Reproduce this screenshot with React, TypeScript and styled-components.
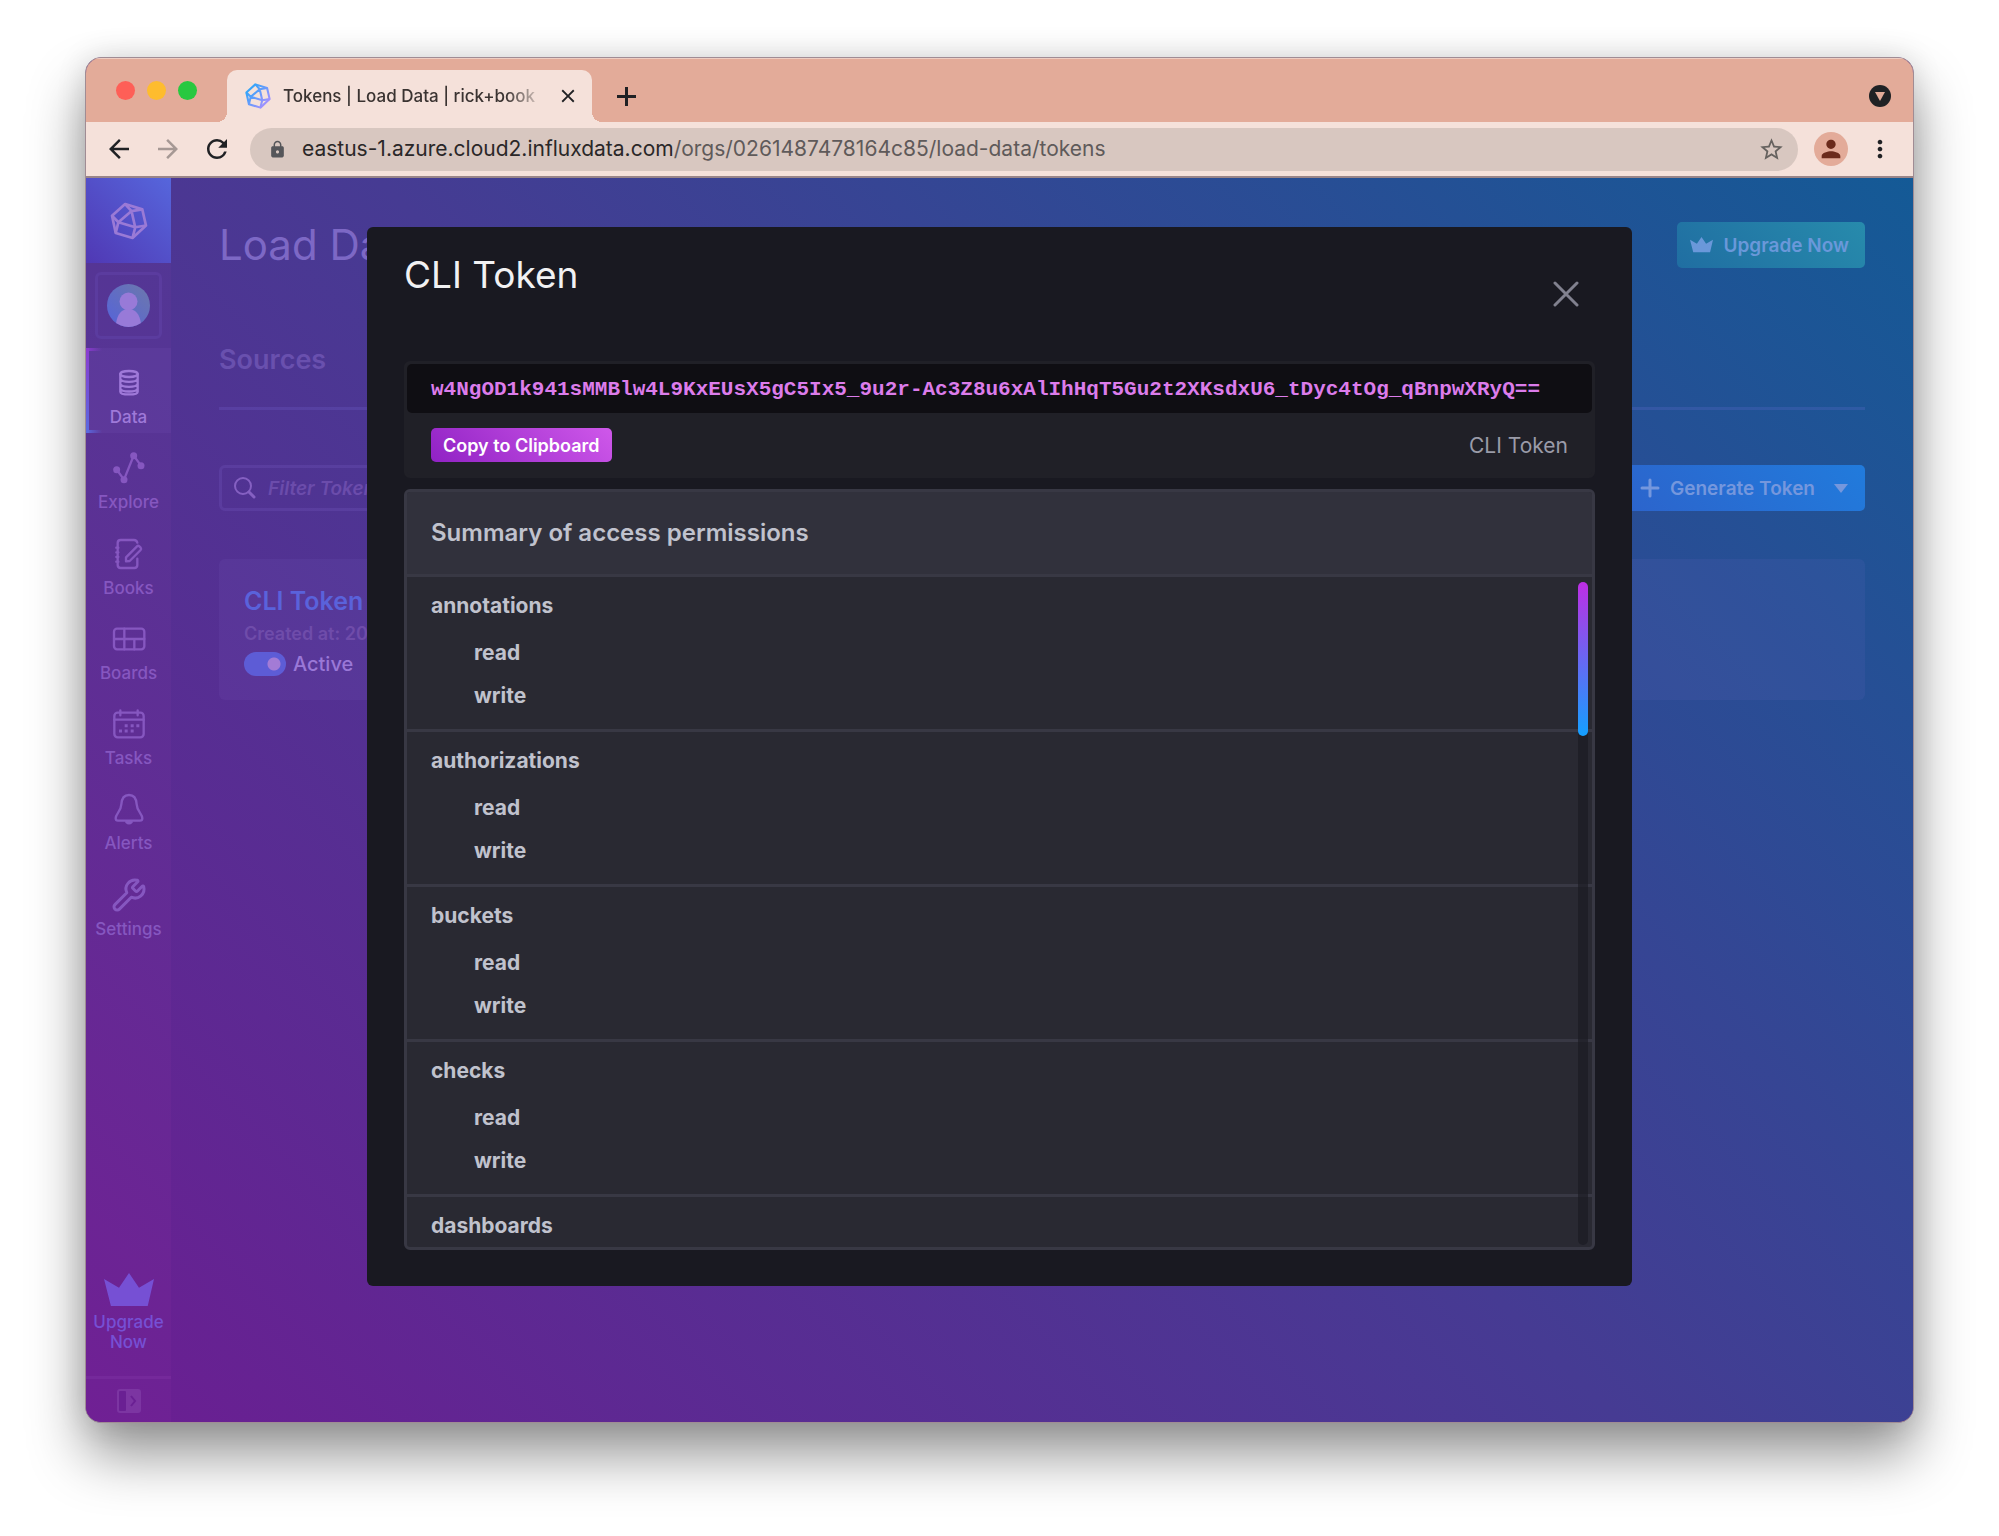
import React from "react";
import styled, { createGlobalStyle, css } from "styled-components";
import {
  MdArrowBack,
  MdArrowForward,
  MdClose,
  MdLock,
  MdMoreVert,
  MdPerson,
  MdRefresh,
  MdStarBorder,
} from "react-icons/md";
import { Wrench } from "lucide-react";

const GlobalStyle = createGlobalStyle`
  *, *::before, *::after { box-sizing: border-box; }
  body { margin: 0; background: #fff; font-family: Inter, sans-serif; }
  h1, h2, h3, p, ul { margin: 0; padding: 0; }
  button, input { font-family: inherit; }
  button { border: 0; padding: 0; background: none; cursor: pointer; }
  a { text-decoration: none; color: inherit; }
  svg { display: block; flex: none; }
`;

/* ---------- browser window ---------- */

const Desktop = styled.div`
  min-height: 100vh;
  display: flex;
  padding: 57px 85px 113px;
`;

const BrowserWindow = styled.div`
  flex: 1;
  min-width: 0;
  display: flex;
  flex-direction: column;
  overflow: hidden;
  border: 1px solid #a08c94;
  border-radius: 16px;
  background: #5a2e92;
  box-shadow: 0 32px 56px rgba(0, 0, 0, 0.42), 0 0 30px rgba(0, 0, 0, 0.12);
`;

const TabStrip = styled.div`
  height: 64px;
  display: flex;
  align-items: flex-end;
  padding: 0 22px 0 30px;
  background: #e3ab99;
  border-top: 1px solid #efcdc2;
`;

const WindowButtons = styled.div`
  display: flex;
  align-items: center;
  gap: 12px;
  height: 64px;
  margin-right: 30px;
`;

const WindowButton = styled.button<{ $color: string }>`
  width: 19px;
  height: 19px;
  border-radius: 50%;
  background: ${(p) => p.$color};
`;

const Tab = styled.div`
  position: relative;
  width: 365px;
  height: 52px;
  display: flex;
  align-items: center;
  gap: 12px;
  padding: 0 13px 0 18px;
  border-radius: 10px 10px 0 0;
  background: #f5e1da;

  &::before,
  &::after {
    content: "";
    position: absolute;
    bottom: 0;
    width: 10px;
    height: 10px;
  }
  &::before {
    right: 100%;
    background: radial-gradient(circle at 0 0, transparent 10px, #f5e1da 10px);
  }
  &::after {
    left: 100%;
    background: radial-gradient(circle at 100% 0, transparent 10px, #f5e1da 10px);
  }
`;

const TabTitle = styled.span`
  flex: 1;
  min-width: 0;
  overflow: hidden;
  white-space: nowrap;
  font-size: 17px;
  line-height: 24px;
  font-weight: 500;
  color: #3a3331;
  mask-image: linear-gradient(90deg, #000 85%, transparent);
`;

const IconButton = styled.button<{ $size: number; $color?: string }>`
  width: ${(p) => p.$size}px;
  height: ${(p) => p.$size}px;
  display: grid;
  place-items: center;
  color: ${(p) => p.$color ?? "#202124"};
`;

const NewTab = styled(IconButton)`
  margin: 0 auto 11px 19px;
`;

const TabSearch = styled(IconButton)`
  margin-bottom: 15px;
`;

const Toolbar = styled.div`
  height: 56px;
  display: flex;
  align-items: center;
  padding: 0 19px 0 18px;
  background: #f5e1da;
  border-bottom: 2px solid #9a8588;
`;

const NavButtons = styled.div`
  display: flex;
  gap: 19px;
  margin-right: 18px;
`;

const AddressBar = styled.div`
  flex: 1;
  min-width: 0;
  height: 43px;
  display: flex;
  align-items: center;
  gap: 15px;
  padding: 0 13px 0 18px;
  border-radius: 22px;
  background: #d8c7c0;
  color: #55565a;
`;

const Url = styled.span`
  flex: 1;
  overflow: hidden;
  white-space: nowrap;
  font-size: 21px;
  line-height: 28px;
  color: #5f5a5a;

  b {
    font-weight: 400;
    color: #2a2728;
  }
`;

const Profile = styled.button`
  width: 34px;
  height: 34px;
  margin: 0 18px 0 16px;
  display: grid;
  place-items: center;
  border-radius: 50%;
  background: #e3ab99;
  color: #6b2a1b;
`;

/* ---------- application ---------- */

const AppFrame = styled.div`
  position: relative;
  flex: 1;
  display: flex;
  background: linear-gradient(45deg, #6b1e92, #463b93 50%, #145a96);
`;

const Sidebar = styled.nav`
  width: 85px;
  display: flex;
  flex-direction: column;
  background: rgba(255, 110, 200, 0.04);
`;

const Brand = styled.a`
  height: 85px;
  display: grid;
  place-items: center;
  background: linear-gradient(45deg, #5038b4, #5666dc);
  color: #9a7ad6;
`;

const UserButton = styled.button`
  width: 67px;
  height: 67px;
  margin: 9px auto;
  display: grid;
  place-items: center;
  border: 3px solid #5b3c9f;
  border-radius: 6px;
`;

const NavList = styled.ul`
  height: 597px;
  display: grid;
  grid-auto-rows: 1fr;
  list-style: none;
`;

const NavLink = styled.a<{ $active?: boolean }>`
  position: relative;
  height: 100%;
  display: flex;
  flex-direction: column;
  align-items: center;
  gap: 6px;
  padding-top: 17px;
  font-size: 17px;
  line-height: 20px;
  font-weight: 500;
  color: #8657c0;
  ${(p) =>
    p.$active &&
    css`
      color: #9f79d9;
      background: rgba(190, 150, 255, 0.06);
      &::before {
        content: "";
        position: absolute;
        inset: 0 auto 0 0;
        width: 16px;
        background:
          linear-gradient(#8b3bd0, #5a6ae0) 0 0 / 3px 100% no-repeat,
          linear-gradient(90deg, #8b3bd0, transparent) 0 0 / 100% 3px no-repeat,
          linear-gradient(90deg, #5a6ae0, transparent) 0 100% / 100% 3px no-repeat;
      }
    `}
`;

const SidebarUpgrade = styled.a`
  margin-top: auto;
  display: flex;
  flex-direction: column;
  align-items: center;
  gap: 6px;
  padding-bottom: 24px;
  font-size: 17px;
  line-height: 20px;
  font-weight: 500;
  text-align: center;
  color: #7650d4;
`;

const CollapseButton = styled.button`
  height: 46px;
  display: grid;
  place-items: center;
  border-top: 3px solid #75299b;
`;

const Page = styled.main`
  flex: 1;
  min-width: 0;
  padding: 44px 48px;
`;

const PageHeader = styled.header`
  display: flex;
  align-items: center;
  justify-content: space-between;
`;

const PageTitle = styled.h1`
  font-size: 42px;
  line-height: 46px;
  font-weight: 400;
  color: #7d68c5;
`;

const ActionButton = styled.button<{ $tone: "teal" | "blue" }>`
  height: 46px;
  display: flex;
  align-items: center;
  gap: 10px;
  padding: 0 16px 0 13px;
  border-radius: 5px;
  font-size: 19px;
  font-weight: 600;
  ${(p) =>
    p.$tone === "teal"
      ? css`
          background: linear-gradient(45deg, #206ea2, #278bac);
          color: #6a98da;
        `
      : css`
          background: linear-gradient(45deg, #2c64cc, #217bdc);
          color: #7597dd;
        `}
`;

const TabsBar = styled.div`
  display: flex;
  margin-top: 53px;
  height: 89px;
  padding-top: 23px;
  border-bottom: 3px solid rgba(135, 125, 240, 0.16);
  font-size: 27px;
  line-height: 32px;
  font-weight: 600;
  color: #6950ae;
`;

const Controls = styled.div`
  display: flex;
  justify-content: space-between;
  margin: 55px 0 48px;
`;

const SearchBox = styled.label`
  width: 340px;
  height: 46px;
  display: flex;
  align-items: center;
  gap: 12px;
  padding: 0 12px;
  border: 3px solid rgba(145, 120, 230, 0.15);
  border-radius: 6px;
  color: #8560c2;

  input {
    flex: 1;
    min-width: 0;
    border: 0;
    padding: 0;
    background: none;
    outline: 0;
    font-size: 19px;
    font-weight: 600;
    font-style: italic;
    color: #8560c2;
  }
  input::placeholder {
    color: #6b4cab;
    opacity: 1;
  }
`;

const TokenCard = styled.article`
  height: 141px;
  display: flex;
  flex-direction: column;
  align-items: flex-start;
  padding: 25px;
  border-radius: 6px;
  background: rgba(140, 120, 220, 0.09);
`;

const TokenName = styled.a`
  font-size: 25px;
  line-height: 34px;
  font-weight: 600;
  color: #5a62db;
`;

const TokenMeta = styled.p`
  font-size: 18px;
  line-height: 32px;
  font-weight: 600;
  color: #6f4caa;
`;

const ToggleLabel = styled.label`
  display: flex;
  align-items: center;
  gap: 7px;
  font-size: 20px;
  line-height: 28px;
  font-weight: 500;
  color: #9a78d7;
`;

const Toggle = styled.input`
  appearance: none;
  width: 42px;
  height: 24px;
  margin: 0;
  border-radius: 12px;
  background: radial-gradient(circle at 30px 12px, #a37bd6 6px, #5d5cd6 7px);
`;

/* ---------- token overlay ---------- */

const Overlay = styled.div`
  position: absolute;
  inset: 0;
  display: flex;
  justify-content: center;
  padding: 49px 16px 136px;
`;

const Dialog = styled.section`
  width: 100%;
  max-width: 1265px;
  display: flex;
  flex-direction: column;
  padding: 25px 37px 36px;
  border-radius: 6px;
  background: #191921;
`;

const DialogHeader = styled.header`
  display: flex;
  justify-content: space-between;
  height: 109px;
  padding-right: 16px;
`;

const DialogTitle = styled.h2`
  font-size: 37px;
  line-height: 46px;
  font-weight: 400;
  color: #f1f1f3;
`;

const DialogClose = styled(IconButton)`
  margin-top: 29px;
`;

const TokenBox = styled.div`
  border: 3px solid #202027;
  border-radius: 6px;
  background: #202027;
`;

const TokenValue = styled.code`
  display: block;
  padding: 3px 24px 0;
  overflow: hidden;
  white-space: nowrap;
  border-radius: 5px;
  background: #0f0e13;
  font-family: "Liberation Mono", monospace;
  font-size: 21px;
  line-height: 46px;
  font-weight: 700;
  color: #dc7ceb;
`;

const TokenFooter = styled.div`
  display: flex;
  align-items: center;
  justify-content: space-between;
  height: 62px;
  padding: 2px 24px 0;
  font-size: 21px;
  color: #9a9ba8;
`;

const CopyButton = styled.button`
  height: 34px;
  padding: 0 12px;
  border-radius: 5px;
  background: linear-gradient(45deg, #9022c4, #cf58ea);
  color: #fff;
  font-size: 18px;
  font-weight: 600;
`;

const Panel = styled.div`
  flex: 1;
  min-height: 0;
  display: flex;
  flex-direction: column;
  margin-top: 11px;
  overflow: hidden;
  border: 3px solid #383844;
  border-radius: 6px;
  background: #292932;
  color: #c0c2cd;
`;

const PanelTitle = styled.h3`
  padding: 25px 24px;
  border-bottom: 3px solid #383844;
  background: #31313c;
  font-size: 24px;
  line-height: 32px;
  font-weight: 600;
`;

const PanelBody = styled.div`
  position: relative;
  flex: 1 1 0;
  min-height: 0;
  overflow: hidden;
`;

const Resource = styled.section`
  padding: 14px 24px 18px;
  border-bottom: 3px solid #383844;
  font-size: 21px;
  line-height: 30px;
  font-weight: 700;

  h4 {
    margin: 0 0 17px;
    font-size: inherit;
    font-weight: inherit;
  }
  ul {
    display: grid;
    row-gap: 13px;
    padding-left: 43px;
    list-style: none;
  }
`;

const ScrollTrack = styled.div`
  position: absolute;
  top: 5px;
  right: 4px;
  bottom: 2px;
  width: 10px;
  border-radius: 5px;
  background: rgba(26, 26, 34, 0.65);
`;

const ScrollThumb = styled.div`
  height: 154px;
  border-radius: 5px;
  background: linear-gradient(#be2ee4, #14a0ff);
`;

/* ---------- drawings ---------- */

const InfluxMark = ({ size, gradient }: { size: number; gradient?: boolean }) => (
  <svg width={size} height={size} viewBox="88 95 113 113" fill="none" strokeWidth={gradient ? 9 : 8} strokeLinejoin="round" stroke={gradient ? "url(#mark)" : "currentColor"}>
    {gradient && (
      <defs>
        <linearGradient id="mark" gradientUnits="userSpaceOnUse" x1="94" y1="110" x2="190" y2="200">
          <stop offset="0" stopColor="#22a8f8" />
          <stop offset="1" stopColor="#b48dff" />
        </linearGradient>
      </defs>
    )}
    <path d="M133 101 184 117 195 165 155 202 105 187 94 136Z" />
    <path d="M113 155 152 122 163 170ZM133 101 152 122 184 117M195 165 163 170 155 202M105 187 113 155 94 136" />
  </svg>
);

const Crown = ({ width }: { width: number }) => (
  <svg width={width} viewBox="0 0 150 100" fill="currentColor">
    <path d="M0 18 45 44 75 0 105 44 150 18 131 100H21Z" />
  </svg>
);

const Avatar = () => (
  <svg width="43" height="43" viewBox="0 0 43 43">
    <defs>
      <linearGradient id="disc" x1="0" y1="1" x2="1" y2="0">
        <stop offset="0" stopColor="#5563da" />
        <stop offset="1" stopColor="#6d78ab" />
      </linearGradient>
      <clipPath id="discClip">
        <circle cx="21.5" cy="21.5" r="21.5" />
      </clipPath>
    </defs>
    <circle cx="21.5" cy="21.5" r="21.5" fill="url(#disc)" />
    <g fill="#987ad8" clipPath="url(#discClip)">
      <circle cx="21.5" cy="17.5" r="9" />
      <path d="M9 40C10 30 15 25 21.500 25S33 30 34 40V43H9Z" />
    </g>
  </svg>
);

const NavIcon = ({ children }: { children: React.ReactNode }) => (
  <svg width="36" height="36" viewBox="0 0 108 108" fill="none" stroke="currentColor" strokeWidth="7" strokeLinecap="round" strokeLinejoin="round">
    {children}
  </svg>
);

const navItems = [
  {
    label: "Data",
    icon: (
      <NavIcon>
        <ellipse cx="54" cy="27" rx="26" ry="9" />
        <path d="M28 27V80C28 91 80 91 80 80V27M28 43C33 53 75 53 80 43M28 58C33 68 75 68 80 58M28 72C33 82 75 82 80 72" />
      </NavIcon>
    ),
  },
  {
    label: "Explore",
    icon: (
      <NavIcon>
        <path d="M17 59 39 89 68 17 90 47" />
        <g fill="currentColor" stroke="none">
          <circle cx="17" cy="59" r="10.500" />
          <circle cx="39" cy="89" r="10.500" />
          <circle cx="68" cy="17" r="10.500" />
          <circle cx="90" cy="47" r="10.500" />
        </g>
      </NavIcon>
    ),
  },
  {
    label: "Books",
    icon: (
      <NavIcon>
        <path d="M79 20Q77 12 69 12H29Q20 12 20 21V87Q20 96 29 96H70Q79 96 79 87V68" />
        <path d="M45 76V64L78 31Q81 28 85 31L89 35Q92 39 89 42L56 75Z" />
        <path d="M16 35H22M16 49H22M16 63H22M16 77H22" />
      </NavIcon>
    ),
  },
  {
    label: "Boards",
    icon: (
      <NavIcon>
        <rect x="9" y="23" width="91" height="62" rx="9" />
        <path d="M9 54H100M40 23V85M70 54V85" />
      </NavIcon>
    ),
  },
  {
    label: "Tasks",
    icon: (
      <NavIcon>
        <rect x="10" y="20" width="88" height="74" rx="10" />
        <path d="M10 41H98M28 13V28M80 13V28" />
        <path strokeWidth="9" strokeLinecap="butt" d="M41 59H50M59 59H68M76 59H85M24 75H33M41 75H50M59 75H68" />
      </NavIcon>
    ),
  },
  {
    label: "Alerts",
    icon: (
      <NavIcon>
        <path d="M54 12C38 12 32 24 31 40C30 62 14 68 14 82Q14 89 21 89H87Q94 89 94 82C94 68 78 62 77 40C76 24 70 12 54 12Z" />
        <path d="M46 93Q54 100 62 93Z" />
      </NavIcon>
    ),
  },
  { label: "Settings", icon: <Wrench size={36} strokeWidth={2} /> },
];

const SearchIcon = () => (
  <svg width="22" height="22" viewBox="0 0 22 22" fill="none" stroke="currentColor" strokeLinecap="round">
    <circle cx="9" cy="9" r="8" strokeWidth="2" />
    <path d="M15 15 20 20" strokeWidth="3" />
  </svg>
);

const CollapseIcon = () => (
  <svg width="24" height="24" viewBox="0 0 24 24">
    <rect width="24" height="24" rx="3" fill="#7c35a2" />
    <rect x="2" y="2" width="7" height="20" rx="1" fill="#6a2093" />
    <path d="M14 7 18 12 14 17" fill="none" stroke="#6a2093" strokeWidth="2" />
  </svg>
);

const resources = [
  { name: "annotations", actions: ["read", "write"] },
  { name: "authorizations", actions: ["read", "write"] },
  { name: "buckets", actions: ["read", "write"] },
  { name: "checks", actions: ["read", "write"] },
  { name: "dashboards", actions: [] },
];
const token =
  "w4NgOD1k941sMMBlw4L9KxEUsX5gC5Ix5_9u2r-Ac3Z8u6xAlIhHqT5Gu2t2XKsdxU6_tDyc4tOg_qBnpwXRyQ==";

const BrowserChrome = () => (
  <>
    <TabStrip>
      <WindowButtons>
        <WindowButton $color="#fe5f57" aria-label="Close window" />
        <WindowButton $color="#febc2e" aria-label="Minimize window" />
        <WindowButton $color="#28c840" aria-label="Zoom window" />
      </WindowButtons>
      <Tab>
        <InfluxMark size={26} gradient />
        <TabTitle>Tokens | Load Data | rick+book</TabTitle>
        <IconButton $size={22} aria-label="Close tab">
          <MdClose size={22} />
        </IconButton>
      </Tab>
      <NewTab $size={30} aria-label="New tab">
        <svg width="19" height="19" viewBox="0 0 19 19" stroke="currentColor" strokeWidth="3">
          <path d="M9.500 0V19M0 9.500H19" />
        </svg>
      </NewTab>
      <TabSearch $size={22} aria-label="Search tabs">
        <svg width="22" height="22" viewBox="0 0 22 22">
          <circle cx="11" cy="11" r="11" fill="#202124" />
          <path d="M6 7H16L11 16Z" fill="#e3ab99" />
        </svg>
      </TabSearch>
    </TabStrip>
    <Toolbar>
      <NavButtons>
        <IconButton $size={30} aria-label="Back">
          <MdArrowBack size={30} />
        </IconButton>
        <IconButton $size={30} $color="#a69894" aria-label="Forward">
          <MdArrowForward size={30} />
        </IconButton>
        <IconButton $size={30} aria-label="Reload">
          <MdRefresh size={30} />
        </IconButton>
      </NavButtons>
      <AddressBar>
        <MdLock size={19} />
        <Url>
          <b>eastus-1.azure.cloud2.influxdata.com</b>/orgs/0261487478164c85/load-data/tokens
        </Url>
        <IconButton $size={28} $color="#66625f" aria-label="Bookmark this page">
          <MdStarBorder size={27} />
        </IconButton>
      </AddressBar>
      <Profile aria-label="Profile">
        <MdPerson size={28} />
      </Profile>
      <IconButton $size={28} aria-label="Browser menu">
        <MdMoreVert size={28} />
      </IconButton>
    </Toolbar>
  </>
);

export default function App() {
  return (
    <Desktop>
      <GlobalStyle />
      <BrowserWindow>
        <BrowserChrome />
        <AppFrame>
          <Sidebar>
            <Brand href="#" aria-label="Home">
              <InfluxMark size={38} />
            </Brand>
            <UserButton aria-label="Account">
              <Avatar />
            </UserButton>
            <NavList>
              {navItems.map((item, i) => (
                <li key={item.label}>
                  <NavLink href="#" $active={i === 0}>
                    {item.icon}
                    {item.label}
                  </NavLink>
                </li>
              ))}
            </NavList>
            <SidebarUpgrade href="#">
              <Crown width={50} />
              <span>
                Upgrade
                <br />
                Now
              </span>
            </SidebarUpgrade>
            <CollapseButton aria-label="Expand sidebar">
              <CollapseIcon />
            </CollapseButton>
          </Sidebar>
          <Page>
            <PageHeader>
              <PageTitle>Load Data</PageTitle>
              <ActionButton $tone="teal">
                <Crown width={23} />
                Upgrade Now
              </ActionButton>
            </PageHeader>
            <TabsBar>
              <a href="#">Sources</a>
            </TabsBar>
            <Controls>
              <SearchBox>
                <SearchIcon />
                <input placeholder="Filter Tokens..." aria-label="Filter tokens" />
              </SearchBox>
              <ActionButton $tone="blue">
                <svg width="20" height="20" viewBox="0 0 20 20" stroke="currentColor" strokeWidth="3" strokeLinecap="round">
                  <path d="M10 2V18M2 10H18" />
                </svg>
                Generate Token
                <svg width="24" height="9" viewBox="0 0 24 9" fill="currentColor">
                  <path d="M9 0H23L16 9Z" />
                </svg>
              </ActionButton>
            </Controls>
            <TokenCard>
              <TokenName href="#">CLI Token</TokenName>
              <TokenMeta>Created at: 20</TokenMeta>
              <ToggleLabel>
                <Toggle type="checkbox" defaultChecked />
                Active
              </ToggleLabel>
            </TokenCard>
          </Page>
          <Overlay>
            <Dialog role="dialog" aria-labelledby="dialog-title">
              <DialogHeader>
                <DialogTitle id="dialog-title">CLI Token</DialogTitle>
                <DialogClose $size={26} $color="#81818f" aria-label="Close">
                  <svg width="26" height="26" viewBox="0 0 26 26" stroke="currentColor" strokeWidth="3" strokeLinecap="round">
                    <path d="M2 2 24 24M24 2 2 24" />
                  </svg>
                </DialogClose>
              </DialogHeader>
              <TokenBox>
                <TokenValue>{token}</TokenValue>
                <TokenFooter>
                  <CopyButton>Copy to Clipboard</CopyButton>
                  <span>CLI Token</span>
                </TokenFooter>
              </TokenBox>
              <Panel>
                <PanelTitle>Summary of access permissions</PanelTitle>
                <PanelBody>
                  {resources.map((resource) => (
                    <Resource key={resource.name}>
                      <h4>{resource.name}</h4>
                      <ul>
                        {resource.actions.map((action) => (
                          <li key={action}>{action}</li>
                        ))}
                      </ul>
                    </Resource>
                  ))}
                  <ScrollTrack>
                    <ScrollThumb />
                  </ScrollTrack>
                </PanelBody>
              </Panel>
            </Dialog>
          </Overlay>
        </AppFrame>
      </BrowserWindow>
    </Desktop>
  );
}
